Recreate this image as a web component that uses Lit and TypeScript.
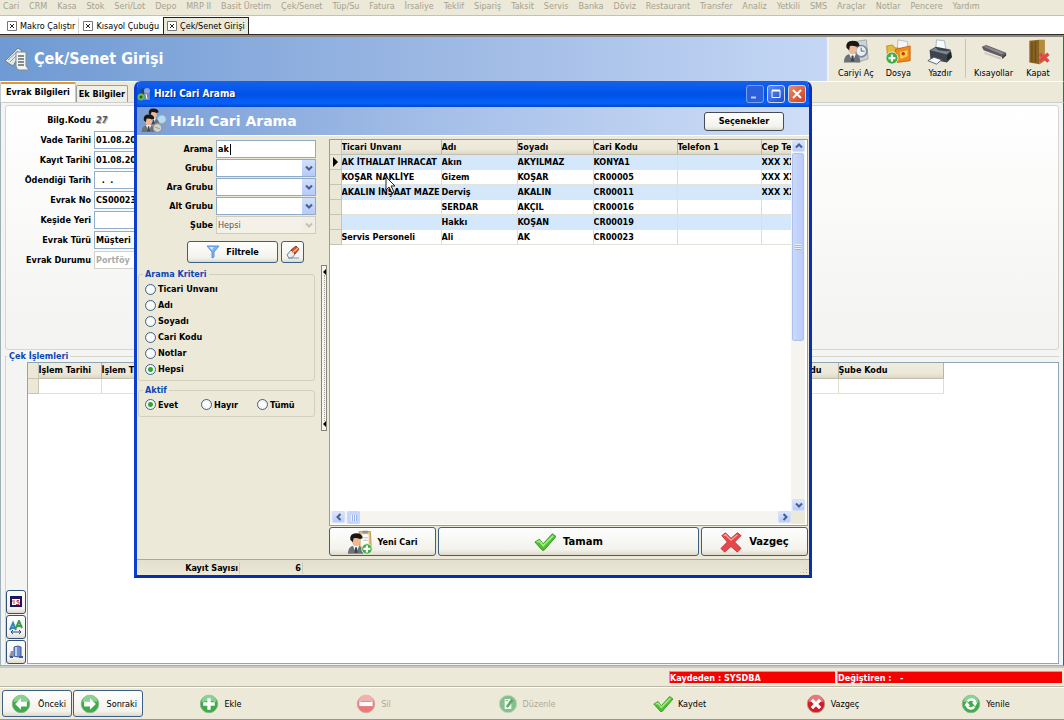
import { LitElement, html, svg, css, nothing } from "lit";
import { customElement } from "lit/decorators.js";
import { classMap } from "lit/directives/class-map.js";

const MENU = ["Cari", "CRM", "Kasa", "Stok", "Seri/Lot", "Depo", "MRP II", "Basit Üretim", "Çek/Senet", "Tüp/Su", "Fatura", "İrsaliye", "Teklif", "Sipariş", "Taksit", "Servis", "Banka", "Döviz", "Restaurant", "Transfer", "Analiz", "Yetkili", "SMS", "Araçlar", "Notlar", "Pencere", "Yardım"];

const person = svg`
  <path d="M1 27q0-9 8-10h3q8 1 8 10z" fill="#6d7276"/>
  <path d="M7 17l4 9 4-9z" fill="#f4f4f4"/><path d="M10 19h2l1 7h-4z" fill="#3c4650"/>
  <ellipse cx="11" cy="11" rx="5" ry="6.500" fill="#eeb996"/>
  <path d="M4 10Q3 2 11 2t8 6l-3 1q-5-2-8-1l-1 5z" fill="#181716"/>`;

const ICONS: Record<string, unknown> = {
  doc: html`<svg viewBox="0 0 26 24"><path d="M0 14L13 1l4 3L8 19z" fill="#e3e8ea" stroke="#6e7d86"/><path d="M3 13l10-9M5 15l8-8" stroke="#8fa0a8"/><path d="M11 5h10v14l3 4H14q-3-1-3-4z" fill="#f2f4f3" stroke="#818a8e"/><path d="M13 9h6M13 12h6M13 15h6M13 18h6" stroke="#5f6c74" stroke-width="1.500"/></svg>`,
  contact: html`<svg viewBox="0 0 30 30"><path d="M14 3l13-2 2 22-13 4z" fill="#cfd3d6" stroke="#9aa2a8"/><circle cx="21" cy="14" r="6.500" fill="#e9f0f5" stroke="#7b8a97" stroke-width="2"/><path d="M21 10v4h4" stroke="#456" fill="none"/>${person}</svg>`,
  folder: html`<svg viewBox="0 0 30 30"><path d="M15 1l11 2v12H14z" fill="#f5f5f8" stroke="#b6b6c4"/><path d="M2 8l7-1 2 3 7 1v13H3z" fill="#e6b93a" stroke="#b98b1a"/><path d="M12 12l17-4v17l-15 2z" fill="#f08a1c" stroke="#c06010"/><path d="M17 15l9-2v7l-8 3z" fill="#ffd04a"/><circle cx="21" cy="17" r="2" fill="#b43a10"/><circle cx="8" cy="22" r="7" fill="#3fae45" stroke="#e9f5e9"/><path d="M8 18v8M4 22h8" stroke="#fff" stroke-width="2.500"/></svg>`,
  printer: html`<svg viewBox="0 0 30 30"><path d="M11 1l9 1 2 11H10z" fill="#f8fbff" stroke="#9fb2c7"/><path d="M3 13l7-4 17 3 2 9-6 6-19-4z" fill="#3d444c"/><path d="M4 13l6-3 3 3 10 1 4-1-4 5z" fill="#7c8791"/><path d="M23 19l5-4v6l-5 4z" fill="#20252a"/><path d="M1 25l7-4 9 3-6 5z" fill="#f4f8fc" stroke="#4a5560"/></svg>`,
  stick: html`<svg viewBox="0 0 30 30"><path d="M1 9l5-2 23 9-4 5L3 13z" fill="#5e5c61"/><path d="M3 9l3-1 21 8-3 2z" fill="#8b8990"/><path d="M24 21l5-5v3l-4 4z" fill="#444"/><path d="M4 16l19 7" stroke="#cfcabd" stroke-width="2"/></svg>`,
  door: html`<svg viewBox="0 0 30 30"><path d="M5 2l12-1v28L5 27z" fill="#8a6424"/><path d="M17 1h6v24l-6 4z" fill="#b58c3e"/><path d="M8 4v22M12 3v24" stroke="#6d4c16" stroke-width="1.500"/><path d="M17 17l10 9M27 17l-10 9" stroke="#e2484a" stroke-width="4"/></svg>`,
  app: html`<svg viewBox="0 0 14 14"><circle cx="6" cy="4" r="2.500" fill="#30415a"/><circle cx="10" cy="4" r="3" fill="#8fa6d6"/><path d="M7 6h6v7H7z" fill="#6f86b8"/><path d="M9 7l1 5" stroke="#fff"/><circle cx="4" cy="10" r="3.500" fill="#69b84f"/><circle cx="4" cy="10" r="1.500" fill="#1f5d2d"/></svg>`,
  people: html`<svg viewBox="0 0 30 30"><circle cx="24" cy="13" r="5" fill="#b9dbf0" stroke="#86a9c4"/><path d="M27 17l2 6" stroke="#99a" stroke-width="2"/><g transform="translate(6 -1) scale(.75)">${person}</g><g transform="translate(0 6) scale(.8)">${person}</g><circle cx="19" cy="23" r="5" fill="#d2d2cc" stroke="#8b8b86"/><path d="M16 22l6 2" stroke="#999"/></svg>`,
  addperson: html`<svg viewBox="0 0 30 30"><path d="M14 3h13l1 19H14z" fill="#e4c27c" stroke="#b58f46"/><path d="M16 6h9v14h-9z" fill="#fbfbfb"/><path d="M18 2h6v3h-6z" fill="#8e9296"/><path d="M19 10h5M19 13h5" stroke="#b8bcc0"/><g transform="translate(0 3) scale(.95)">${person}</g><circle cx="23" cy="23" r="6" fill="#3fae45" stroke="#e4f2e4"/><path d="M23 19v8M19 23h8" stroke="#fff" stroke-width="2.500"/></svg>`,
  check: html`<svg viewBox="0 0 24 24"><path d="M1 12l5-3 4 5L20 3l4 3-13 15h-2z" fill="#4fc02f" stroke="#2f9423"/><path d="M3 12l3-1 4 5L21 5" fill="none" stroke="#a4e884" stroke-width="2"/></svg>`,
  cross: html`<svg viewBox="0 0 24 24"><path d="M2 5l4-3 6 6 7-6 4 3-7 7 7 7-4 4-7-6-7 6-4-4 7-7z" fill="#e5484b" stroke="#c23035"/><path d="M4 5l2-1 6 6 7-6" fill="none" stroke="#f7a5a2" stroke-width="1.500"/></svg>`,
  prev: html`<svg viewBox="0 0 24 24"><circle cx="12" cy="12" r="10.500" fill="#3cab48" stroke="#8fae92"/><path d="M3 10a9 9 0 0 1 18 0q-9-3-18 0z" fill="#8bd18f"/><path d="M5 12l7-7v4h7v6h-7v4z" fill="#fff"/></svg>`,
  next: html`<svg viewBox="0 0 24 24"><circle cx="12" cy="12" r="10.500" fill="#3cab48" stroke="#8fae92"/><path d="M3 10a9 9 0 0 1 18 0q-9-3-18 0z" fill="#8bd18f"/><path d="M19 12l-7-7v4H5v6h7v4z" fill="#fff"/></svg>`,
  plus: html`<svg viewBox="0 0 24 24"><circle cx="12" cy="12" r="10.500" fill="#3cab48" stroke="#8fae92"/><path d="M3 10a9 9 0 0 1 18 0q-9-3-18 0z" fill="#8bd18f"/><path d="M12 5v14M5 12h14" stroke="#fff" stroke-width="4"/></svg>`,
  minus: html`<svg viewBox="0 0 24 24"><circle cx="12" cy="12" r="10.500" fill="#ea7a7a" stroke="#d9a5a5"/><path d="M3 10a9 9 0 0 1 18 0q-9-3-18 0z" fill="#f4b0ae"/><path d="M4 12h16" stroke="#fff" stroke-width="5"/></svg>`,
  edit: html`<svg viewBox="0 0 24 24"><circle cx="12" cy="12" r="10.500" fill="#86bf8e" stroke="#c4d8c4"/><path d="M8 6h8v12H8z" fill="#f6faf6"/><path d="M9 8h3M10 15l6-9 2 2-6 8z" fill="#5fa768" stroke="#5fa768"/></svg>`,
  stop: html`<svg viewBox="0 0 24 24"><circle cx="12" cy="12" r="10.500" fill="#d31d25" stroke="#c09a9a"/><path d="M3 10a9 9 0 0 1 18 0q-9-3-18 0z" fill="#e9787a"/><path d="M7 7l10 10M17 7L7 17" stroke="#fff" stroke-width="4"/></svg>`,
  refresh: html`<svg viewBox="0 0 24 24"><circle cx="12" cy="12" r="10.500" fill="#3cab48" stroke="#8fae92"/><path d="M3 10a9 9 0 0 1 18 0q-9-3-18 0z" fill="#8bd18f"/><path d="M7 14a5 5 0 0 0 9 1M17 10a5 5 0 0 0-9-1" fill="none" stroke="#fff" stroke-width="3"/><path d="M4 14l3-5 4 5zM20 10l-3 5-4-5z" fill="#fff"/></svg>`,
  funnel: html`<svg viewBox="0 0 14 14"><path d="M1 1h12L8 7v5l-2 1V7z" fill="#7fb2f2" stroke="#5a92de"/><path d="M3 2h5L6 5z" fill="#d5e8ff"/></svg>`,
  eraser: html`<svg viewBox="0 0 14 14"><path d="M1 10l4-5 4 4-3 4H3z" fill="#e9eef4" stroke="#7d7f88"/><path d="M5 5l5-4 3 3-4 5z" fill="#d8503f" stroke="#8e3a30"/><path d="M6 8l6-5" stroke="#f0c460" stroke-width="1.500"/><path d="M2 13h11" stroke="#7a96b8"/></svg>`,
  calendar: html`<svg viewBox="0 0 14 14"><path d="M1 1h12v11H1z" fill="#1c1660"/><path d="M3 4h8v6H3z" fill="#fff"/><path d="M5 5v4M3 6h1M10 5.500H8V7h2v2.500H7" stroke="#c23b46" fill="none"/></svg>`,
  fontsize: html`<svg viewBox="0 0 14 14"><path d="M1 10l3-7 3 7M2 8h4" stroke="#3088b8" stroke-width="2" fill="none"/><path d="M7 8l3-7 3 7M8 6h4" stroke="#37a047" stroke-width="2" fill="none"/><path d="M2 12h10M4 10l-2 2 2 2M10 10l2 2-2 2" stroke="#274b8e" fill="none"/></svg>`,
  barrel: html`<svg viewBox="0 0 14 14"><path d="M5 2q4-2 7 0v9q-3 2-7 0z" fill="#6f8fd2" stroke="#40599c"/><path d="M7 2v9" stroke="#dce6fb" stroke-width="1.500"/><path d="M0 12l2-6h3v6z" fill="#8c95aa"/><path d="M10 12h4M1 12h3" stroke="#40599c" stroke-width="2"/></svg>`,
  chevron: html`<svg viewBox="0 0 8 8"><path d="M1 2.500L4 5.500 7 2.500" fill="none" stroke="currentColor" stroke-width="2"/></svg>`,
  chevleft: html`<svg viewBox="0 0 8 8"><path d="M5.500 1L2.500 4 5.500 7" fill="none" stroke="currentColor" stroke-width="2"/></svg>`,
  chevright: html`<svg viewBox="0 0 8 8"><path d="M2.500 1L5.500 4 2.500 7" fill="none" stroke="currentColor" stroke-width="2"/></svg>`,
  chevup: html`<svg viewBox="0 0 8 8"><path d="M1 5.500L4 2.500 7 5.500" fill="none" stroke="currentColor" stroke-width="2"/></svg>`,
  min: html`<svg viewBox="0 0 14 14"><path d="M3 10.500h5" stroke="#b9cdf8" stroke-width="2"/></svg>`,
  max: html`<svg viewBox="0 0 14 14"><path d="M3 3.500h8v7H3z" fill="none" stroke="#fff"/><path d="M3 3.500h8" stroke="#fff" stroke-width="2"/></svg>`,
  close: html`<svg viewBox="0 0 14 14"><path d="M3 3l8 8M11 3l-8 8" stroke="#fff" stroke-width="2"/></svg>`,
  tabx: html`<svg viewBox="0 0 10 10"><path d="M.5.5h9v9h-9z" fill="#fff" stroke="#777"/><path d="M3 3l4 4M7 3L3 7" stroke="#222"/></svg>`,
  cursor: html`<svg viewBox="0 0 12 18"><path d="M1 1v13l3-3 3 6 2-1-3-6h4z" fill="#fff" stroke="#222"/></svg>`,
};

const icon = (name: string, size: string) => html`<span class="icon ${size}" aria-hidden="true">${ICONS[name]}</span>`;

const base = css`
  *, *::before, *::after { box-sizing: border-box; }
  button, input, select { font: inherit; color: inherit; margin: 0; }
  .icon { display: block; flex: none; }
  .icon svg { display: block; width: 100%; height: 100%; }
  .s8 { width: 8px; height: 8px; }
  .s10 { width: 10px; height: 10px; }
  .s14 { width: 14px; height: 14px; }
  .s20 { width: 20px; height: 20px; }
  .s22 { width: 22px; height: 22px; }
  .s26 { width: 26px; height: 26px; }
  .btn {
    display: flex; align-items: center; justify-content: center; gap: 6px; padding: 0;
    border: 1px solid #3d5f85; border-radius: 3px;
    background: linear-gradient(#fefefe, #f3f2ec 80%, #dedacb);
  }
  table { border-collapse: collapse; table-layout: fixed; }
  th, td {
    height: 15px; padding: 0; text-align: left; line-height: 12px; white-space: nowrap; overflow: hidden;
    border-right: 1px solid #dcdccf; border-bottom: 1px solid #e3e3da;
  }
  th { height: 14px; background: linear-gradient(#efecdf, #ebe8d8 70%, #dcd6c4); border-right-color: #b9b5a4; border-bottom-color: #c3bfae; }
  .ind { background: #ebe8d8; border-right-color: #c8c4b2; border-bottom-color: #c8c4b2; }
`;

const ROWS = [
  ["AK İTHALAT İHRACAT", "Akın", "AKYILMAZ", "KONYA1", "", "XXX XXX"],
  ["KOŞAR NAKLİYE", "Gizem", "KOŞAR", "CR00005", "", "XXX XXX"],
  ["AKALIN İNŞAAT MAZE", "Derviş", "AKALIN", "CR00011", "", "XXX XXX"],
  ["", "SERDAR", "AKÇIL", "CR00016", "", ""],
  ["", "Hakkı", "KOŞAN", "CR00019", "", ""],
  ["Servis Personeli", "Ali", "AK", "CR00023", "", ""],
];

@customElement("search-dialog")
class SearchDialog extends LitElement {
  static styles = [base, css`
    :host {
      display: flex; flex-direction: column; border: 3px solid #0a3fd0; border-top-width: 0;
      border-radius: 7px 7px 0 0; background: #ece9d8; overflow: hidden;
      border-bottom-color: #0a2ea8; border-right-color: #0830b0;
    }
    .title {
      display: flex; align-items: center; gap: 3px; height: 26px; padding: 0 3px 0 0; flex: none;
      background: linear-gradient(#1c5fe0, #0a5cf0 20%, #0050e4 50%, #0562fb 85%, #0346c8); color: #fff; font-size: 10px; text-shadow: 1px 1px #0a2c80;
    }
    .title b { flex: 1; }
    .cap { width: 18px; height: 18px; padding: 1px; border: 1px solid #c9d6f6; border-radius: 3px; background: linear-gradient(135deg, #5c8bf2, #1d4fd0); display: grid; place-items: center; }
    .cap.dim { border-color: #7da0ee; background: #2a60dc; }
    .cap.red { background: linear-gradient(135deg, #e98a6c, #d04018); }
    .head {
      display: flex; align-items: center; gap: 3px; height: 29px; padding: 0 25px 0 4px; flex: none;
      background: linear-gradient(90deg, #7a9fd6, #a9c2ea 50%, #cfdef7); border-bottom: 1px solid #fff;
    }
    h2 { flex: 1; margin: 0; font: bold 14px/20px "DejaVu Sans", sans-serif; color: #fff; }
    .opts { width: 80px; height: 19px; border-color: #444d57; }
    .body { display: flex; flex: 1; min-height: 0; }
    .left { width: 184px; padding: 4px 0 0 1px; flex: none; }
    .fields { display: grid; grid-template-columns: 75px 100px; column-gap: 3px; }
    .fields label { text-align: right; line-height: 19px; }
    .box { display: flex; position: relative; height: 18px; }
    .box input, .box select { width: 100%; height: 18px; padding: 0 1px; border: 1px solid #8fabc9; border-radius: 0; background: #fff; appearance: none; outline: none; }
    .box .arrow { position: absolute; right: 1px; top: 1px; width: 13px; height: 16px; display: grid; place-items: center; background: linear-gradient(#d3e0fc, #b6cafa); color: #465f8e; pointer-events: none; }
    .box.off select { background: #f4f2e8; border-color: #d0ccba; color: #555; opacity: 1; font-weight: normal; }
    .box.off .arrow { background: #f1efe4; color: #c5c2b2; }
    .caret { position: absolute; left: 14px; top: 4px; width: 1px; height: 11px; background: #000; }
    .acts { display: flex; gap: 3px; margin: 6px 0 0 49px; }
    .acts .btn { height: 22px; }
    .filter { width: 91px; }
    .clear { width: 23px; }
    fieldset { margin: 5px 0 0; padding: 0 0 3px 6px; width: 177px; border: 1px solid #d3cfbd; border-radius: 3px; min-width: 0; }
    fieldset + fieldset { margin-top: 3px; }
    legend { padding: 0 2px; margin-left: -2px; color: #0b46b8; line-height: 12px; }
    .list { display: grid; grid-auto-rows: 16px; padding-top: 1px; }
    .inline { display: grid; grid-template-columns: 56px 56px 56px; height: 17px; }
    .radio { display: flex; align-items: center; gap: 2px; }
    .radio input { appearance: none; width: 11px; height: 11px; border: 1px solid #3f638c; border-radius: 50%; background: radial-gradient(circle, #fff 30%, #e3e7ea); }
    .radio input:checked { background: radial-gradient(circle, #31a531 2px, #f5f8f5 3px); }
    .split { width: 6px; height: 166px; margin-top: 129px; flex: none; border: 1px solid #858577; background: #f6f5ee; display: flex; flex-direction: column; align-items: center; justify-content: space-between; padding: 3px 0; }
    .split i { width: 0; height: 0; border: 3px solid transparent; border-left-width: 0; border-right-color: #000; }
    .split u { flex: 1; border-left: 1px dotted #999; }
    .right { flex: 1; display: flex; flex-direction: column; min-width: 0; margin: 3px 1px 0 2px; }
    .grid { flex: 1; display: grid; grid-template: minmax(0, 1fr) 13px / minmax(0, 1fr) 14px; min-height: 0; border: 1px solid #8f9eac; background: #fff; padding: 0 2px 1px 0; }
    .view { overflow: hidden; }
    .view table { width: 515px; }
    tr.alt td:not(.ind) { background: #d5e8fb; border-color: #d5e8fb; border-right-color: #d5e0ec; }
    .mark { display: block; margin: 0 auto; width: 0; height: 0; border: 5px solid transparent; border-left-color: #000; border-right-width: 0; }
    .vs, .hs { display: flex; background: #f5f4ef; }
    .vs { flex-direction: column; padding-left: 1px; }
    .sb { width: 13px; height: 12px; display: grid; place-items: center; background: linear-gradient(#dbe5fd, #b9cbf9); border: 1px solid #d3dffb; border-radius: 2px; color: #44608f; padding: 0; flex: none; }
    .vthumb { height: 188px; margin-top: 1px; width: 12px; border-radius: 2px; background: linear-gradient(90deg, #cbd9fd, #b8cbf9); border: 1px solid #aec2f2; display: grid; place-items: center; }
    .grip { width: 6px; height: 6px; background: repeating-linear-gradient(#eef3ff 0 1px, #9db4ea 1px 2px); }
    .hs { padding: 0 0 0 2px; gap: 2px; }
    .hthumb { width: 13px; background: #c6d6fc; border-radius: 2px; display: grid; place-items: center; }
    .hthumb .grip { background: repeating-linear-gradient(90deg, #eef3ff 0 1px, #9db4ea 1px 2px); }
    .grow { flex: 1; }
    .corner { background: #ece9d8; }
    .buttons { display: grid; grid-template-columns: 107fr 261fr 107fr; gap: 2px; padding: 1px 0 3px; height: 33px; flex: none; }
    .buttons .btn { gap: 4px; }
    .buttons .big { gap: 7px; }
    .big { font-family: "DejaVu Sans", sans-serif; font-size: 10px; }
    .status { display: flex; height: 16px; align-items: center; flex: none; border-top: 1px solid #aca896; background: linear-gradient(#e3dfce, #ece9d8); }
    .status span { text-align: right; border-right: 1px solid #cfcbb9; padding-right: 1px; line-height: 12px; }
    .k { width: 103px; } .v { width: 63px; }
    .size { margin: 4px 1px 0 auto; width: 9px; height: 9px; background: radial-gradient(circle, #b1ac98 1px, transparent 1px) 0 0 / 3px 3px; clip-path: polygon(100% 0, 100% 100%, 0 100%); }
    .pointer { position: absolute; left: 248px; top: 95px; width: 12px; height: 18px; }
    .pointer svg { display: block; }
  `];

  private combo(id: string, label: string) {
    return html`<label for=${id}>${label}</label>
      <span class="box"><select id=${id}><option></option></select><span class="arrow">${icon("chevron", "s8")}</span></span>`;
  }

  private radio(group: string, label: string, on: boolean) {
    return html`<label class="radio"><input type="radio" name=${group} .checked=${on}>${label}</label>`;
  }

  render() {
    return html`
      <div class="title">${icon("app", "s14")}<b>Hızlı Cari Arama</b>
        <button class="cap dim" aria-label="Simge durumuna küçült">${icon("min", "s14")}</button>
        <button class="cap" aria-label="Ekranı kapla">${icon("max", "s14")}</button>
        <button class="cap red" aria-label="Kapat">${icon("close", "s14")}</button>
      </div>
      <div class="head">${icon("people", "s26")}<h2>Hızlı Cari Arama</h2><button class="btn opts">Seçenekler</button></div>
      <div class="body">
        <div class="left">
          <div class="fields">
            <label for="q">Arama</label><span class="box"><input id="q" type="text" .value=${"ak"}><span class="caret"></span></span>
            ${this.combo("g", "Grubu")}${this.combo("ag", "Ara Grubu")}${this.combo("alt", "Alt Grubu")}
            <label for="sube">Şube</label>
            <span class="box off"><select id="sube" disabled><option>Hepsi</option></select><span class="arrow">${icon("chevron", "s8")}</span></span>
          </div>
          <div class="acts">
            <button class="btn filter">${icon("funnel", "s14")}Filtrele</button>
            <button class="btn clear" aria-label="Temizle">${icon("eraser", "s14")}</button>
          </div>
          <fieldset><legend>Arama Kriteri</legend><div class="list">
            ${["Ticari Unvanı", "Adı", "Soyadı", "Cari Kodu", "Notlar", "Hepsi"].map(t => this.radio("kriter", t, t === "Hepsi"))}
          </div></fieldset>
          <fieldset><legend>Aktif</legend><div class="inline">
            ${["Evet", "Hayır", "Tümü"].map(t => this.radio("aktif", t, t === "Evet"))}
          </div></fieldset>
        </div>
        <div class="split"><i></i><u></u><i></i></div>
        <div class="right">
          <div class="grid">
            <div class="view"><table>
              <colgroup><col width="11"><col width="100"><col width="76"><col width="76"><col width="84"><col width="84"><col width="84"></colgroup>
              <thead><tr><th class="ind"></th>${["Ticari Unvanı", "Adı", "Soyadı", "Cari Kodu", "Telefon 1", "Cep Telefonu"].map(h => html`<th>${h}</th>`)}</tr></thead>
              <tbody>${ROWS.map((r, i) => html`<tr class=${classMap({ alt: i % 2 === 0 && i < 5 })}>
                <td class="ind">${i === 0 ? html`<span class="mark"></span>` : nothing}</td>${r.map(c => html`<td>${c}</td>`)}</tr>`)}</tbody>
            </table></div>
            <div class="vs"><button class="sb" aria-label="Yukarı">${icon("chevup", "s8")}</button><div class="vthumb"><span class="grip"></span></div><span class="grow"></span><button class="sb" aria-label="Aşağı">${icon("chevron", "s8")}</button></div>
            <div class="hs"><button class="sb" aria-label="Sola">${icon("chevleft", "s8")}</button><div class="hthumb"><span class="grip"></span></div><span class="grow"></span><button class="sb" aria-label="Sağa">${icon("chevright", "s8")}</button></div>
            <div class="corner"></div>
          </div>
          <div class="buttons">
            <button class="btn">${icon("addperson", "s26")}Yeni Cari</button>
            <button class="btn big">${icon("check", "s22")}Tamam</button>
            <button class="btn big">${icon("cross", "s22")}Vazgeç</button>
          </div>
        </div>
      </div>
      <div class="status"><span class="k">Kayıt Sayısı</span><span class="v">6</span><i class="size"></i></div>
      <span class="pointer">${ICONS.cursor}</span>
    `;
  }
}

@customElement("app-root")
class AppRoot extends LitElement {
  static styles = [base, css`
    :host {
      display: flex; flex-direction: column; position: relative; height: 100vh; min-height: 620px; overflow: hidden;
      background: #ece9d8; color: #000; font: 9px/12px "DejaVu Sans Condensed", "DejaVu Sans", sans-serif;
    }
    .menu { display: flex; justify-content: space-between; height: 16px; padding: 0 84px 0 3px; flex: none; border-bottom: 1px solid #c5c2b0; color: #a5a290; white-space: nowrap; }
    .menu a { color: inherit; text-decoration: none; }
    .docs { display: flex; align-items: flex-end; height: 19px; padding-left: 3px; background: #fff; border-bottom: 1px solid #2e2a26; flex: none; }
    .doc { display: flex; align-items: center; gap: 3px; height: 17px; padding: 0 3px; border: 1px solid transparent; border-bottom: 0; background: none; white-space: nowrap; }
    .doc.first { border-right-color: #d5d5d0; }
    .doc.on { border-color: #222; background: #ece9d8; }
    .top { display: flex; height: 47px; flex: none; border-top: 2px solid #8d8b84; border-bottom: 1px solid #fff; border-right: 1px solid #3c5a96; }
    .banner { flex: 1; display: flex; align-items: center; gap: 3px; padding-left: 5px; background: linear-gradient(90deg, #6f9ad3, #a2bce6 60%, #c5d7f5); }
    h1 { margin: 0; font-size: 16px; line-height: 20px; color: #fff; }
    .tools { display: flex; width: 236px; justify-content: space-between; padding: 2px 8px 0 9px; border-left: 2px solid #f4f2e8; }
    .tool { display: flex; flex-direction: column; align-items: center; gap: 2px; padding: 0; border: 0; background: none; white-space: nowrap; min-width: 34px; }
    .sep { width: 1px; background: #c9c5b4; margin-bottom: 3px; }
    .tabs { display: flex; align-items: flex-end; height: 20px; flex: none; font-weight: bold; border-right: 1px solid #3c5a96; }
    .tab { height: 17px; padding: 0 2px; border: 1px solid #9a9e9c; border-bottom: 0; border-radius: 2px 2px 0 0; background: #f2f0e6; font-weight: bold; }
    .tab.on { height: 20px; padding: 0 5px 2px; border-color: #c5c9c6; border-top: 2px solid #e8952a; background: #fcfcfb; }
    .page { flex: 1; display: flex; flex-direction: column; min-height: 0; padding: 2px 4px 1px; border: 1px solid #9fb0b8; border-top-color: #c9cfcc; border-right-color: #3c5a96; background: #f4f4f2; font-weight: bold; }
    .form { flex: none; height: 245px; padding: 4px 0 0; border: 1px solid #d5d6cf; border-radius: 3px; background: linear-gradient(#fff, #f3f3f1); display: grid; grid-template-columns: 85px 160px; grid-auto-rows: 20px; column-gap: 3px; align-items: center; }
    .form label, .form span { text-align: right; line-height: 20px; }
    .form input { height: 18px; padding: 0 1px; border: 1px solid #93aecb; background: #fff; outline: none; }
    .form input:disabled { color: #aaa; border-color: #d3d3cb; }
    .form output { font-style: italic; color: #555; text-shadow: 1px 1px #bbb; padding-left: 2px; }
    .ops { flex: 1; display: flex; min-width: 0; min-height: 0; margin: 0; padding: 0; border: 1px solid #d3d4cc; border-bottom: 0; border-right: 0; }
    .ops legend { margin-left: 1px; padding: 0 2px; color: #0b46b8; line-height: 12px; }
    .inner { display: flex; flex: 1; height: 100%; }
    .side { display: flex; flex-direction: column; justify-content: flex-end; gap: 1px; width: 21px; padding: 0 1px 0 0; flex: none; }
    .side .btn { height: 24px; border-color: #31517d; }
    .sheet { flex: 1; border: 1px solid #8fa4b4; background: #fff; overflow: hidden; }
    .sheet table { width: 915px; }
    .sheet th { height: 15px; }
    .sheet .end { text-align: right; padding-right: 16px; }
    .state { display: flex; gap: 2px; height: 21px; padding: 3px 2px 3px 0; flex: none; border-top: 2px solid #c6c9c8; border-bottom: 1px solid #bab6a5; font-weight: bold; }
    .state span { line-height: 13px; }
    .fill { flex: 1; }
    .red { background: #f60000; color: #fff; border: 1px solid #c89a90; border-width: 1px 0 0 1px; white-space: pre; }
    .saved { width: 166px; } .changed { width: 225px; }
    .bar { display: flex; gap: 1px; height: 33px; padding: 2px; flex: none; border-top: 1px solid #fff; border-bottom: 1px solid #99968a; }
    .nav { width: 70px; padding: 0 5px 0 0; gap: 7px; justify-content: flex-end; }
    .cmds { flex: 1; display: grid; grid-template-columns: repeat(6, 1fr); }
    .cmd { display: flex; align-items: center; justify-content: center; gap: 5px; border: 0; background: none; padding: 0; }
    .cmd:disabled { color: #aca998; }
    search-dialog { position: absolute; left: 134px; top: 81px; width: 678px; height: 497px; font-weight: bold; }
  `];

  private field(id: string, label: string, value: string, off = false) {
    return html`<label for=${id}>${label}</label><input id=${id} type="text" .value=${value} ?disabled=${off}>`;
  }

  private tool(name: string, label: string) {
    return html`<button class="tool">${icon(name, "s26")}${label}</button>`;
  }

  private cmd(name: string, label: string, off = false) {
    return html`<button class="cmd" ?disabled=${off}>${icon(name, "s20")}${label}</button>`;
  }

  render() {
    return html`
      <nav class="menu">${MENU.map(m => html`<a href="#">${m}</a>`)}</nav>
      <div class="docs">
        ${["Makro Çalıştır", "Kısayol Çubuğu", "Çek/Senet Girişi"].map((t, i) => html`<button class=${classMap({ doc: true, first: i === 0, on: i === 2 })}>${icon("tabx", "s10")}${t}</button>`)}
      </div>
      <header class="top">
        <div class="banner">${icon("doc", "s26")}<h1>Çek/Senet Girişi</h1></div>
        <div class="tools">${this.tool("contact", "Cariyi Aç")}${this.tool("folder", "Dosya")}${this.tool("printer", "Yazdır")}<i class="sep"></i>${this.tool("stick", "Kısayollar")}${this.tool("door", "Kapat")}</div>
      </header>
      <div class="tabs"><button class="tab on">Evrak Bilgileri</button><button class="tab">Ek Bilgiler</button></div>
      <main class="page">
        <div class="form">
          <span>Bilg.Kodu</span><output>27</output>
          ${this.field("vade", "Vade Tarihi", "01.08.2013")}
          ${this.field("kayit", "Kayıt Tarihi", "01.08.2013")}
          ${this.field("odeme", "Ödendiği Tarih", "  .  .")}
          ${this.field("no", "Evrak No", "CS00023")}
          ${this.field("yer", "Keşide Yeri", "")}
          ${this.field("tur", "Evrak Türü", "Müşteri")}
          ${this.field("durum", "Evrak Durumu", "Portföy", true)}
        </div>
        <fieldset class="ops"><legend>Çek İşlemleri</legend><div class="inner">
          <div class="side">
            <button class="btn" aria-label="Takvim">${icon("calendar", "s14")}</button>
            <button class="btn" aria-label="Yazı boyutu">${icon("fontsize", "s14")}</button>
            <button class="btn" aria-label="Kayıt">${icon("barrel", "s14")}</button>
          </div>
          <div class="sheet"><table>
            <colgroup><col width="10"><col width="63"><col width="100"><col width="637"><col width="105"></colgroup>
            <thead><tr><th class="ind"></th><th>İşlem Tarihi</th><th>İşlem Türü</th><th class="end">Kodu</th><th>Şube Kodu</th></tr></thead>
            <tbody><tr><td class="ind"></td><td></td><td></td><td></td><td></td></tr></tbody>
          </table></div>
        </div></fieldset>
      </main>
      <div class="state"><span class="fill"></span><span class="red saved">Kaydeden : SYSDBA</span><span class="red changed">Değiştiren :   -</span></div>
      <footer class="bar">
        <button class="btn nav">${icon("prev", "s20")}Önceki</button>
        <button class="btn nav">${icon("next", "s20")}Sonraki</button>
        <div class="cmds">${this.cmd("plus", "Ekle")}${this.cmd("minus", "Sil", true)}${this.cmd("edit", "Düzenle", true)}${this.cmd("check", "Kaydet")}${this.cmd("stop", "Vazgeç")}${this.cmd("refresh", "Yenile")}</div>
      </footer>
      <search-dialog></search-dialog>
    `;
  }
}
